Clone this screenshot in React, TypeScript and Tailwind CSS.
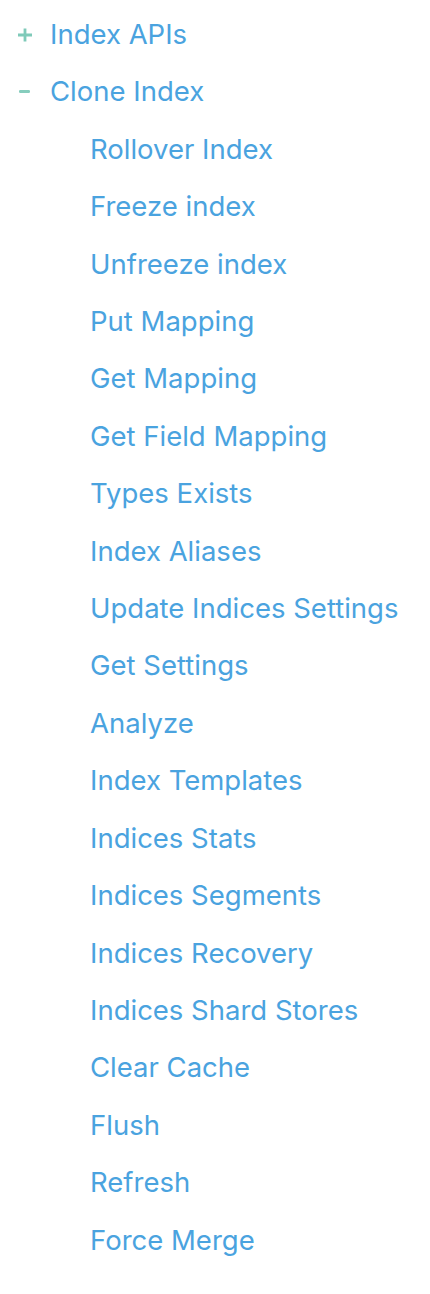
import React from 'react';

const SUB_ITEMS = [
  'Rollover Index',
  'Freeze index',
  'Unfreeze index',
  'Put Mapping',
  'Get Mapping',
  'Get Field Mapping',
  'Types Exists',
  'Index Aliases',
  'Update Indices Settings',
  'Get Settings',
  'Analyze',
  'Index Templates',
  'Indices Stats',
  'Indices Segments',
  'Indices Recovery',
  'Indices Shard Stores',
  'Clear Cache',
  'Flush',
  'Refresh',
  'Force Merge',
];

function App() {
  return (
    <div
      className="min-h-screen bg-white pt-[6px] text-[27.5px] leading-[57.4px] text-[#4aa3df]"
      style={{ fontFamily: 'Inter, "Noto Sans", sans-serif' }}
    >
      <ul>
        <li className="flex items-center">
          <span className="w-[50px] pl-[17px] flex items-center">
            <svg width="16" height="16" viewBox="0 0 16 16">
              <path d="M6.6 1.5h2.8v13H6.6zM1 6.6h14v2.8H1z" fill="#7fcab9" />
            </svg>
          </span>
          <a>Index APIs</a>
        </li>
        <li>
          <div className="flex items-center">
            <span className="w-[50px] pl-[19px] flex items-center">
              <svg width="12" height="6" viewBox="0 0 12 6">
                <rect x="0" y="1" width="11" height="3" rx="1.2" fill="#86cdbd" />
              </svg>
            </span>
            <a>Clone Index</a>
          </div>
          <ul className="pl-[90px]">
            {SUB_ITEMS.map((name) => (
              <li key={name}>
                <a>{name}</a>
              </li>
            ))}
          </ul>
        </li>
      </ul>
    </div>
  );
}

export default App;
